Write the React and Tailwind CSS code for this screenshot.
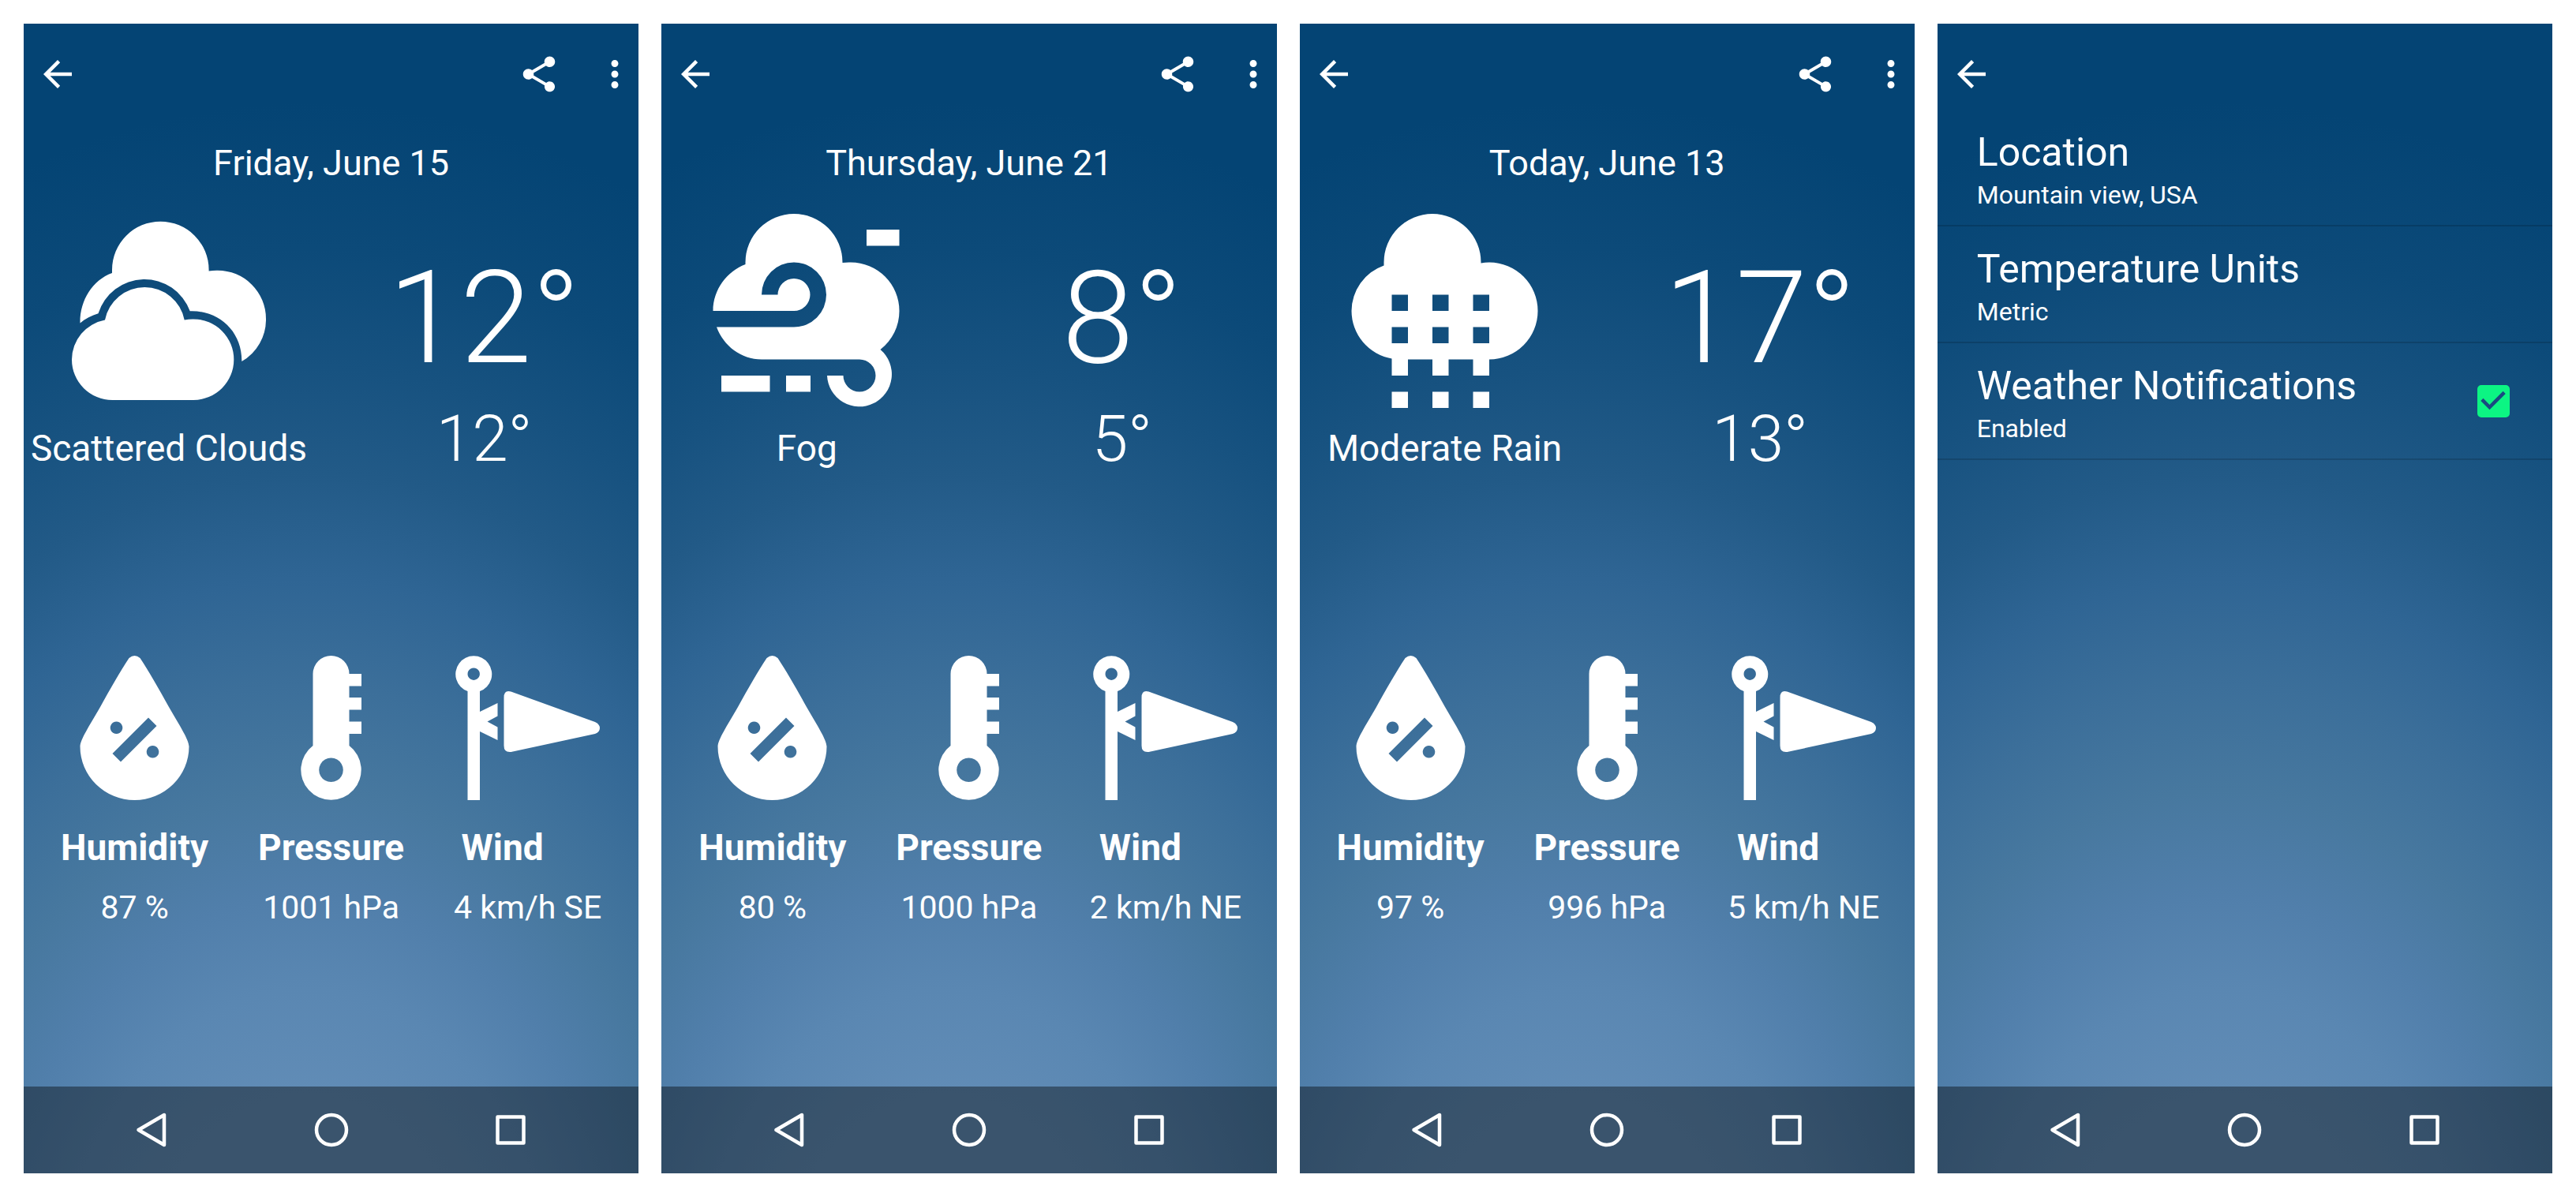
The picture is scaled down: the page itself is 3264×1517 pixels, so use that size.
import React from "react";

const WEATHER = [
  { date: "Friday, June 15", icon: "clouds", text: "Scattered Clouds", high: "12°", low: "12°", humidity: "87 %", pressure: "1001 hPa", wind: "4 km/h SE" },
  { date: "Thursday, June 21", icon: "fog", text: "Fog", high: "8°", low: "5°", humidity: "80 %", pressure: "1000 hPa", wind: "2 km/h NE" },
  { date: "Today, June 13", icon: "rain", text: "Moderate Rain", high: "17°", low: "13°", humidity: "97 %", pressure: "996 hPa", wind: "5 km/h NE" },
];

function Clouds() {
  return (
    <svg viewBox="0 0 246 246" className="size-[246px]" fill="currentColor" aria-hidden="true">
      <path d="M10.500 138.500C10 110 26 84 51 75V71A61.300 61.300 0 0 1 173.600 71V72.500A61.300 61.300 0 0 1 184.700 71.700A61.300 61.300 0 0 1 246 133A61.300 61.300 0 0 1 215.300 187C216 150 187 122 149.700 123.300A61.300 61.300 0 0 0 33.500 126.300C25 129 17 133 10.500 138.500Z" />
      <path d="M51.300 236A51.300 51.300 0 0 1 0 184.700A51.300 51.300 0 0 1 42 134.500A51.300 51.300 0 0 1 142.700 134.500A51.300 51.300 0 0 1 154 133.400A51.300 51.300 0 0 1 205.300 184.700A51.300 51.300 0 0 1 154 236Z" />
    </svg>
  );
}

function Fog() {
  return (
    <svg viewBox="0 0 246 246" className="size-[246px]" fill="currentColor" aria-hidden="true">
      <path d="M4.500 123C4.500 96 22 73 45.500 64V61.500A61.500 61.500 0 1 1 168.500 61.500V62A61.500 61.500 0 0 1 179 61.500A61.500 61.500 0 0 1 240.500 123A61.500 61.500 0 0 1 216.500 172A41 41 0 1 1 149 205H169.500A20.500 20.500 0 1 0 190 184.500H66C40 184.500 18 167.500 9 143.500H107A41 41 0 1 0 66 102.500H86.500A20.500 20.500 0 1 1 107 123Z" />
      <path d="M199 20h41.500v20.500H199zM15 205h61.500v20.500H15zM97 205h31v20.500H97z" />
    </svg>
  );
}

function Rain() {
  return (
    <svg viewBox="0 0 246 246" className="size-[246px]" fill="currentColor" fillRule="evenodd" aria-hidden="true">
      <path d="M45.500 65.500V61.500A61.500 61.500 0 1 1 168.500 61.500V62.500A61.500 61.500 0 0 1 179 61.500A61.500 61.500 0 0 1 240.500 123A61.500 61.500 0 0 1 179 184.500V205H158.500V184.500H127.500V205H107V184.500H76V205H55.500V183.500A61.500 61.500 0 0 1 4.500 123A61.500 61.500 0 0 1 45.500 65.500ZM55.500 102.500V123H76V102.500ZM107 102.500V123H127.500V102.500ZM158.500 102.500V123H179V102.500ZM55.500 143.500V164H76V143.500ZM107 143.500V164H127.500V143.500ZM158.500 143.500V164H179V143.500Z" />
      <path d="M55.500 225.500H76V246H55.500zM107 225.500h20.500V246H107zM158.500 225.500H179V246h-20.500z" />
    </svg>
  );
}

const CONDITIONS = { clouds: Clouds, fog: Fog, rain: Rain };

function Drop() {
  return (
    <svg viewBox="0 0 183 183" className="size-[183px]" fill="currentColor" fillRule="evenodd" aria-hidden="true">
      <path d="M84.500 3Q91.500-3 98.500 3C109 19 123 43 135 65C150 91 160 106 160.500 115A69 68 0 0 1 22.500 115C23 106 33 91 48 65C60 43 74 19 84.500 3ZM68.500 83.500a7.800 7.800 0 1 0 .01 0ZM114.500 114a7.800 7.800 0 1 0 .01 0ZM109 78.500l10.500 10.500L74 134.500 63.500 124Z" />
    </svg>
  );
}

function Thermometer() {
  return (
    <svg viewBox="0 0 183 183" className="size-[183px]" fill="currentColor" fillRule="evenodd" aria-hidden="true">
      <path d="M68.500 23a23 23 0 0 1 46 0H130V38.500H114.500V53H130V68.500H114.500V83.500H130V99H114.500V114A38.200 38.200 0 1 1 68.500 114ZM91.500 129.500a15.300 15.300 0 1 0 .01 0Z" />
    </svg>
  );
}

function Windsock() {
  return (
    <svg viewBox="0 0 183 183" className="size-[183px]" fill="currentColor" fillRule="evenodd" aria-hidden="true">
      <path d="M15.500 183V45A23 23 0 1 1 31 45V71L53.500 60V76.500L40.500 83.500L53.500 90.500V107L31 96V183ZM23.200 15.500a7.700 7.700 0 1 0 .01 0Z" />
      <path d="M61.500 53Q61.500 43 70.500 45.500L177 84Q183 87 183 91.500Q183 97 177 99L70.500 122Q61.500 123 61.500 114Z" />
    </svg>
  );
}

function IconButton({ label, children }) {
  return (
    <button type="button" aria-label={label} className="flex size-[54px] items-center justify-center">
      <svg viewBox="0 0 24 24" className="size-[54px]" fill="currentColor" aria-hidden="true">{children}</svg>
    </button>
  );
}

function Header({ actions }) {
  return (
    <header className="flex items-center justify-between pt-[37px] pr-[3px] pb-[18px] pl-4">
      <IconButton label="Back">
        <path d="M20 11H7.830l5.590-5.590L12 4l-8 8 8 8 1.410-1.410L7.830 13H20v-2z" />
      </IconButton>
      {actions && (
        <div className="flex gap-[42px]">
          <IconButton label="Share">
            <path d="M18 16.080c-.76 0-1.440.3-1.960.77L8.910 12.700c.05-.23.09-.46.09-.7s-.04-.47-.09-.7l7.050-4.110c.54.5 1.250.81 2.040.81 1.660 0 3-1.340 3-3s-1.340-3-3-3-3 1.340-3 3c0 .24.04.47.09.7L8.040 9.810C7.500 9.310 6.790 9 6 9c-1.660 0-3 1.340-3 3s1.340 3 3 3c.79 0 1.500-.31 2.040-.81l7.120 4.160c-.05.21-.08.43-.08.65 0 1.610 1.310 2.920 2.920 2.920s2.920-1.310 2.920-2.920-1.310-2.920-2.920-2.920z" />
          </IconButton>
          <IconButton label="More options">
            <path d="M12 8c1.100 0 2-.9 2-2s-.9-2-2-2-2 .9-2 2 .9 2 2 2zm0 2c-1.100 0-2 .9-2 2s.9 2 2 2 2-.9 2-2-.9-2-2-2zm0 6c-1.100 0-2 .9-2 2s.9 2 2 2 2-.9 2-2-.9-2-2-2z" />
          </IconButton>
        </div>
      )}
    </header>
  );
}

function NavBar() {
  const button = "flex size-[54px] items-center justify-center";
  const icon = "size-[48px]";
  return (
    <nav aria-label="System" className="mt-auto grid h-[110px] grid-cols-3 place-items-center bg-black/40 px-12">
      <button type="button" aria-label="Back" className={button}>
        <svg viewBox="0 0 48 48" className={icon} fill="none" stroke="currentColor" strokeWidth="4.500" strokeLinejoin="round" aria-hidden="true">
          <path d="M40 5V43L7.500 24Z" />
        </svg>
      </button>
      <button type="button" aria-label="Home" className={button}>
        <svg viewBox="0 0 48 48" className={icon} fill="none" stroke="currentColor" strokeWidth="4.500" aria-hidden="true">
          <circle cx="24" cy="24" r="19" />
        </svg>
      </button>
      <button type="button" aria-label="Recent apps" className={button}>
        <svg viewBox="0 0 48 48" className={icon} fill="none" stroke="currentColor" strokeWidth="4.500" strokeLinejoin="round" aria-hidden="true">
          <path d="M7.500 7.500H40.500V40.500H7.500Z" />
        </svg>
      </button>
    </nav>
  );
}

function Screen({ actions, children }) {
  return (
    <section className="flex flex-col bg-[radial-gradient(ellipse_154%_115%_at_46%_115%,#618cb6_19%,#5a87b2_27%,#517fab_34%,#47789f_42%,#3c6f9a_50%,#2f6594_58%,#225a87_66%,#175280_74%,#0c4a79_83%,#044474_94%)]">
      <Header actions={actions} />
      {children}
      <NavBar />
    </section>
  );
}

function Stat({ icon, name, value, nameClass }) {
  return (
    <div className="flex w-[249px] flex-col items-center whitespace-nowrap">
      {icon}
      <dt className={nameClass}>{name}</dt>
      <dd className="mt-6 text-[41px] leading-[50px]">{value}</dd>
    </div>
  );
}

function WeatherScreen({ day }) {
  const Condition = CONDITIONS[day.icon];
  const name = "mt-[33px] text-[46px] leading-[54px] font-bold";
  return (
    <Screen actions>
      <h2 className="mt-[41px] text-center text-[45px] leading-[54px]">{day.date}</h2>
      <div className="mt-[37px] flex items-end">
        <div className="flex w-[368px] flex-col items-center gap-6 whitespace-nowrap">
          <Condition />
          <p className="text-[46px] leading-[54px]">{day.text}</p>
        </div>
        <div className="flex flex-1 flex-col items-center pl-5 font-light">
          <p className="mb-8 text-[164px] leading-[164px]">{day.high}</p>
          <p className="text-[82px] leading-[78px]">{day.low}</p>
        </div>
      </div>
      <dl className="mt-[236px] flex justify-center">
        <Stat icon={<Drop />} name="Humidity" value={day.humidity} nameClass={name} />
        <Stat icon={<Thermometer />} name="Pressure" value={day.pressure} nameClass={name} />
        <Stat icon={<Windsock />} name="Wind" value={day.wind} nameClass={name + " pr-16"} />
      </dl>
    </Screen>
  );
}

const ROW = "flex items-center justify-between border-b-2 border-black/15 pr-12 pl-[50px] text-left";

function RowText({ title, detail }) {
  return (
    <span className="flex flex-col gap-2 pt-[26px] pb-5">
      <span className="text-[50px] leading-[56px]">{title}</span>
      <span className="text-[32px] leading-[36px]">{detail}</span>
    </span>
  );
}

function SettingsScreen() {
  return (
    <Screen>
      <button type="button" className={ROW}>
        <RowText title="Location" detail="Mountain view, USA" />
      </button>
      <button type="button" className={ROW}>
        <RowText title="Temperature Units" detail="Metric" />
      </button>
      <label className={ROW}>
        <RowText title="Weather Notifications" detail="Enabled" />
        <span className="grid size-[54px] place-items-center">
          <input type="checkbox" defaultChecked className="peer col-start-1 row-start-1 size-[41px] appearance-none rounded-[5px] border-4 border-[#0cf583] checked:bg-[#0cf583]" />
          <svg viewBox="0 0 24 24" className="pointer-events-none invisible col-start-1 row-start-1 size-[54px] fill-[#1a4a80] peer-checked:visible" aria-hidden="true">
            <path d="M10 17l-5-5 1.410-1.410L10 14.170l7.590-7.590L19 8l-9 9z" />
          </svg>
        </span>
      </label>
    </Screen>
  );
}

export default function App() {
  return (
    <main className="grid min-h-screen grid-cols-4 gap-[29px] bg-white p-[30px] font-['Roboto',sans-serif] text-white">
      {WEATHER.map((day) => (
        <WeatherScreen key={day.date} day={day} />
      ))}
      <SettingsScreen />
    </main>
  );
}
